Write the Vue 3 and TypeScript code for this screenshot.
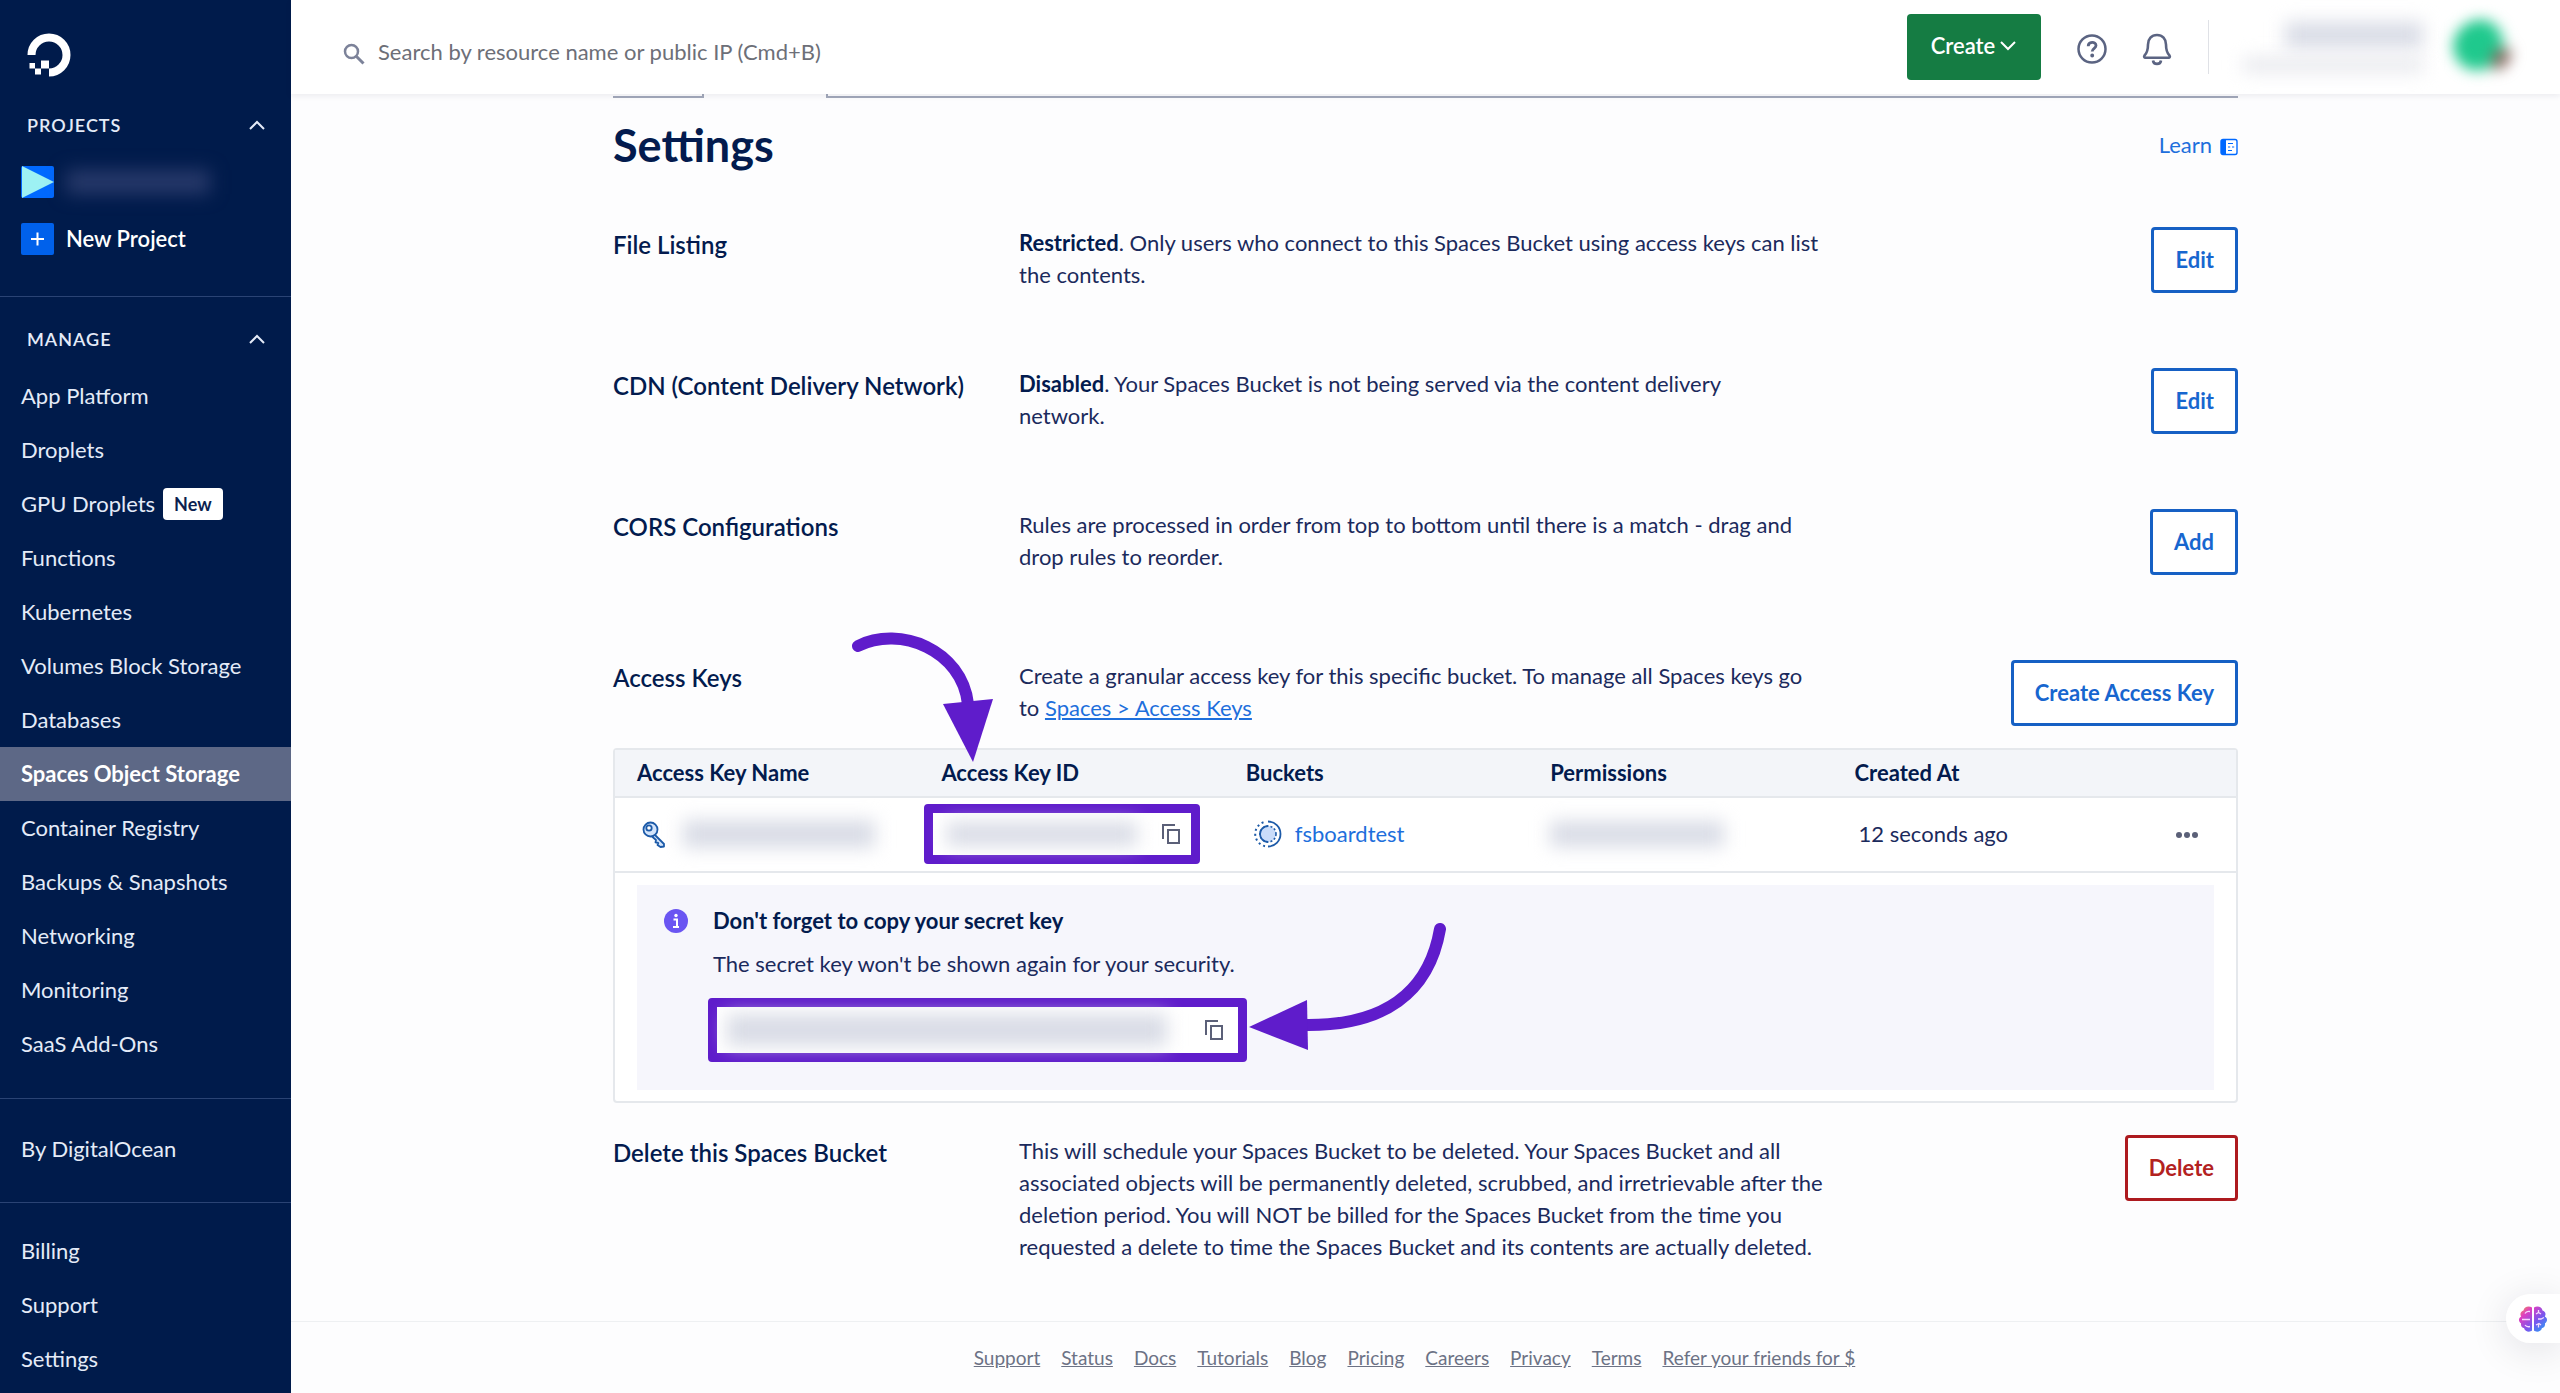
<script setup lang="ts">
import { ref } from 'vue'

interface NavItem {
  label: string
  badge?: string
  active?: boolean
}

interface SettingRow {
  title: string
  lead?: string
  lines: string[]
  action: string
}

const manageItems: NavItem[] = [
  { label: 'App Platform' },
  { label: 'Droplets' },
  { label: 'GPU Droplets', badge: 'New' },
  { label: 'Functions' },
  { label: 'Kubernetes' },
  { label: 'Volumes Block Storage' },
  { label: 'Databases' },
  { label: 'Spaces Object Storage', active: true },
  { label: 'Container Registry' },
  { label: 'Backups & Snapshots' },
  { label: 'Networking' },
  { label: 'Monitoring' },
  { label: 'SaaS Add-Ons' },
]

const accountItems = ['Billing', 'Support', 'Settings']

const settings: SettingRow[] = [
  {
    title: 'File Listing',
    lead: 'Restricted',
    lines: ['. Only users who connect to this Spaces Bucket using access keys can list', 'the contents.'],
    action: 'Edit',
  },
  {
    title: 'CDN (Content Delivery Network)',
    lead: 'Disabled',
    lines: ['. Your Spaces Bucket is not being served via the content delivery', 'network.'],
    action: 'Edit',
  },
  {
    title: 'CORS Configurations',
    lines: ['Rules are processed in order from top to bottom until there is a match - drag and', 'drop rules to reorder.'],
    action: 'Add',
  },
]

const columns = ['Access Key Name', 'Access Key ID', 'Buckets', 'Permissions', 'Created At']

const footerLinks = [
  'Support', 'Status', 'Docs', 'Tutorials', 'Blog', 'Pricing', 'Careers', 'Privacy', 'Terms', 'Refer your friends for $',
]

const query = ref('')
</script>

<template>
  <div class="app">
    <aside class="sidebar">
      <a class="logo" href="#" aria-label="Home">
        <svg width="44" height="44" viewBox="0 0 44 44">
          <path d="M4.500 22 A17.500 17.500 0 1 1 22 39.500" fill="none" stroke="#fff" stroke-width="8" />
          <path d="M14 27.500h8v8h-8zM8 35.500h6v6H8zM2.500 30h5.500v5.500H2.500z" fill="#fff" />
        </svg>
      </a>

      <section class="group projects">
        <button class="group-title" type="button">
          PROJECTS
          <svg width="18" height="12" viewBox="0 0 18 12"><path d="M2 10l7-7 7 7" fill="none" stroke="currentColor" stroke-width="2" /></svg>
        </button>
        <a class="project" href="#" aria-label="Project">
          <svg width="33" height="32" viewBox="0 0 33 32"><rect width="33" height="32" rx="2" fill="#0069ff" /><path d="M1 0l32 16L1 32z" fill="#9df1f3" /></svg>
          <span class="redacted redacted-project"></span>
        </a>
        <a class="project" href="#">
          <svg width="33" height="32" viewBox="0 0 33 32"><rect width="33" height="32" rx="2" fill="#0061eb" /><path d="M10 16h13M16.500 9.500v13" stroke="#fff" stroke-width="2" /></svg>
          New Project
        </a>
      </section>

      <nav class="group manage">
        <button class="group-title" type="button">
          MANAGE
          <svg width="18" height="12" viewBox="0 0 18 12"><path d="M2 10l7-7 7 7" fill="none" stroke="currentColor" stroke-width="2" /></svg>
        </button>
        <a v-for="item in manageItems" :key="item.label" class="nav-item" :class="{ active: item.active }" href="#">
          {{ item.label }}
          <span v-if="item.badge" class="badge">{{ item.badge }}</span>
        </a>
      </nav>

      <nav class="group partner">
        <a class="nav-item" href="#">By DigitalOcean</a>
      </nav>

      <nav class="group account">
        <a v-for="label in accountItems" :key="label" class="nav-item" href="#">{{ label }}</a>
      </nav>
    </aside>

    <div class="page">
      <header class="topbar">
        <label class="search">
          <svg width="22" height="22" viewBox="0 0 22 22" fill="none" stroke="#7c8299"><circle cx="8.500" cy="8.500" r="6.500" stroke-width="2.500" /><path d="M13.500 13.500l7 7" stroke-width="3" /></svg>
          <input v-model="query" type="search" aria-label="Search" placeholder="Search by resource name or public IP (Cmd+B)" />
        </label>
        <button class="create" type="button">
          Create
          <svg width="18" height="12" viewBox="0 0 18 12"><path d="M2 2l7 7 7-7" fill="none" stroke="#fff" stroke-width="2" /></svg>
        </button>
        <button class="icon-button help" type="button" aria-label="Help">
          <svg width="32" height="32" viewBox="0 0 32 32" fill="none" stroke="#5b6482"><circle cx="16" cy="16" r="13.500" stroke-width="2.500" /><path d="M12.200 13.200c0-5 7.800-5 7.800-.6 0 2.800-3.800 2.800-3.800 6" stroke-width="2.800" /><circle cx="16.200" cy="22.500" r="1.200" stroke-width="1.500" fill="#5b6482" /></svg>
        </button>
        <button class="icon-button bell" type="button" aria-label="Notifications">
          <svg width="32" height="34" viewBox="0 0 32 34" fill="none" stroke="#5b6482" stroke-width="2.600" stroke-linejoin="round"><path d="M16 3c-5.500 0-9 4-9 9.500 0 6-1 8.500-3.500 11-.8 1-.3 2.200 1 2.200h23c1.300 0 1.800-1.200 1-2.200-2.500-2.500-3.500-5-3.500-11C25 7 21.500 3 16 3z" /><path d="M12 28.500c.5 4.500 7.500 4.500 8 0" /></svg>
        </button>
        <div class="account-menu">
          <span class="account-lines">
            <span class="redacted redacted-team"></span>
            <span class="redacted redacted-mail"></span>
          </span>
          <span class="avatar"></span>
        </div>
      </header>

      <main class="content">
        <div class="tab-edge">
          <span class="tab-edge-left"></span>
          <span class="tab-edge-right"></span>
        </div>

        <div class="heading">
          <h1>Settings</h1>
          <a class="learn" href="#">
            Learn
            <svg width="18" height="18" viewBox="0 0 18 18"><rect x="1" y="1.500" width="16" height="15" rx="2" fill="#fff" stroke="#0069ff" stroke-width="1.400" /><path d="M1 3.500a2 2 0 0 1 2-2h3v15H3a2 2 0 0 1-2-2z" fill="#0069ff" /><path d="M8 5.500h5M8 9h2.200M12 9h2.200M8 12.500h4" stroke="#0069ff" stroke-width="1.200" /></svg>
          </a>
        </div>

        <section v-for="row in settings" :key="row.title" class="setting">
          <h2>{{ row.title }}</h2>
          <p>
            <strong v-if="row.lead">{{ row.lead }}</strong>{{ row.lines[0] }}<br />{{ row.lines[1] }}
          </p>
          <button class="outline" type="button">{{ row.action }}</button>
        </section>

        <section class="setting keys-intro">
          <h2>Access Keys</h2>
          <p>
            Create a granular access key for this specific bucket. To manage all Spaces keys go<br />to
            <a href="#">Spaces &gt; Access Keys</a>
          </p>
          <button class="outline" type="button">Create Access Key</button>
        </section>

        <div class="table-frame">
          <table>
            <thead>
              <tr>
                <th v-for="column in columns" :key="column" scope="col">{{ column }}</th>
                <th class="menu-column" aria-label="Actions"></th>
              </tr>
            </thead>
            <tbody>
              <tr class="key-row">
                <td>
                  <div class="cell name-cell">
                    <svg width="26" height="28" viewBox="0 0 26 28" fill="#d3e4fb" stroke="#1c5aa8" stroke-width="1.800" stroke-linejoin="round"><path d="M13.500 14.500l9.500 9.500v2.500l-3.500.5-3-2 .8-2-2.800-.6.500-2.400-4-3.500z" /><circle cx="9.500" cy="9.500" r="7" /><circle cx="8" cy="8" r="2.700" fill="#fff" /></svg>
                    <span class="redacted redacted-name"></span>
                  </div>
                </td>
                <td class="id-column">
                  <div class="callout id-callout">
                    <span class="redacted redacted-id"></span>
                    <button class="copy" type="button" aria-label="Copy access key ID">
                      <svg width="20" height="22" viewBox="0 0 20 22" fill="none" stroke="#5b6078" stroke-width="2"><path d="M2 16V2h12" /><path d="M7 7h11v13H7z" /></svg>
                    </button>
                    <svg class="arrow arrow-down" width="150" height="136" viewBox="850 628 150 136">
                      <path d="M858 646C900 625 962 650 968 704" fill="none" stroke="#5f1ccb" stroke-width="12" stroke-linecap="round" />
                      <path d="M943 704l50-5-20 63z" fill="#5f1ccb" />
                    </svg>
                  </div>
                </td>
                <td>
                  <div class="cell bucket-cell">
                    <svg width="28" height="28" viewBox="0 0 28 28" fill="none" stroke="#1c5aa8"><circle cx="14" cy="14" r="8" fill="#c9dcfa" stroke-width="1.600" stroke-dasharray="2 2" /><path d="M14 6a8 8 0 0 0 0 16" stroke-width="1.800" /><path d="M14 1.500a12.500 12.500 0 0 1 0 25" stroke-width="1.800" /><path d="M11 26.200a12.500 12.500 0 0 1 0-24.400" stroke-width="2" stroke-dasharray="2 3" /></svg>
                    <a href="#">fsboardtest</a>
                  </div>
                </td>
                <td><div class="cell"><span class="redacted redacted-permission"></span></div></td>
                <td><div class="cell created">12 seconds ago</div></td>
                <td class="menu-column">
                  <button class="more" type="button" aria-label="More actions">
                    <svg width="24" height="8" viewBox="0 0 24 8" fill="#5b6078"><circle cx="4" cy="4" r="3" /><circle cx="12" cy="4" r="3" /><circle cx="20" cy="4" r="3" /></svg>
                  </button>
                </td>
              </tr>
              <tr class="notice-row">
                <td colspan="6">
                  <div class="notice">
                    <svg class="info" width="24" height="24" viewBox="0 0 24 24"><circle cx="12" cy="12" r="12" fill="#6a55f2" /><path d="M9.500 10.500h3.500v7.500M9 18h6" stroke="#fff" stroke-width="2" fill="none" /><circle cx="12" cy="6.500" r="1.700" fill="#fff" /></svg>
                    <div class="notice-text">
                      <strong>Don't forget to copy your secret key</strong>
                      <p>The secret key won't be shown again for your security.</p>
                      <div class="callout secret-callout">
                        <span class="redacted redacted-secret"></span>
                        <button class="copy" type="button" aria-label="Copy secret key">
                          <svg width="20" height="22" viewBox="0 0 20 22" fill="none" stroke="#5b6078" stroke-width="2"><path d="M2 16V2h12" /><path d="M7 7h11v13H7z" /></svg>
                        </button>
                        <svg class="arrow arrow-left" width="200" height="134" viewBox="1250 920 200 134">
                          <path d="M1441 931C1430 995 1385 1028 1306 1027" fill="none" stroke="#5f1ccb" stroke-width="12" stroke-linecap="round" />
                          <path d="M1308 1002l1 50-59-23z" fill="#5f1ccb" />
                        </svg>
                      </div>
                    </div>
                  </div>
                </td>
              </tr>
            </tbody>
          </table>
        </div>

        <section class="setting delete-row">
          <h2>Delete this Spaces Bucket</h2>
          <p>
            This will schedule your Spaces Bucket to be deleted. Your Spaces Bucket and all<br />
            associated objects will be permanently deleted, scrubbed, and irretrievable after the<br />
            deletion period. You will NOT be billed for the Spaces Bucket from the time you<br />
            requested a delete to time the Spaces Bucket and its contents are actually deleted.
          </p>
          <button class="outline danger" type="button">Delete</button>
        </section>
      </main>

      <footer class="footer">
        <a v-for="link in footerLinks" :key="link" href="#">{{ link }}</a>
      </footer>
    </div>

    <button class="assistant" type="button" aria-label="Assistant">
      <svg width="30" height="28" viewBox="0 0 30 28">
        <defs>
          <linearGradient id="brain" x1="0" y1="0" x2="1" y2="1">
            <stop offset="0" stop-color="#f2a43c" />
            <stop offset=".25" stop-color="#e03fc0" />
            <stop offset=".6" stop-color="#7a55ee" />
            <stop offset="1" stop-color="#1fa8f5" />
          </linearGradient>
        </defs>
        <path d="M14 2.500C11 .5 6 1.500 5.500 5.500 2 6.500 2 10 3.200 11.500 0 13 .5 17 3 18.200 2.500 22 5 23 6 23c1 4 6 4.500 8 2.500zM16 2.500c3-2 8-1 8.500 3C28 6.500 28 10 26.800 11.500 30 13 29.500 17 27 18.200 27.500 22 25 23 24 23c-1 4-6 4.500-8 2.500z" fill="url(#brain)" />
        <path d="M4 14.500h8M7 8.500c1-2 3-2.500 5-2M7 20c1 1.500 3 2 5 1.500M18 9l2.500-1.500L23 9M20.500 7.500V5M20 14h3l3-1.500M18 20l3-1.500 2 1.500M20.500 18.500v4" fill="none" stroke="#f6d9ff" stroke-width="1.300" />
      </svg>
    </button>
  </div>
</template>

<style>
body {
  margin: 0;
  background: #fdfdfe;
}
</style>

<style scoped>
.app {
  display: flex;
  min-height: 100vh;
  font-family: Lato, 'Open Sans', sans-serif;
  font-size: 22px;
  line-height: 32px;
  color: #1b2a5c;
  background: #fdfdfe;
}

.app *,
.app {
  box-sizing: border-box;
}

button {
  font: inherit;
  border: 0;
  padding: 0;
  background: none;
  color: inherit;
  cursor: pointer;
}

a {
  color: #1e6fdc;
  text-decoration: none;
}

svg {
  display: block;
  flex: none;
}

.redacted {
  display: block;
  filter: blur(9px);
  background: #d9dce6;
}

/* Sidebar */
.sidebar {
  flex: none;
  width: 291px;
  background: #001b4b;
  color: #e4ebf8;
}

.logo {
  display: block;
  padding: 33px 27px 20px;
}

.group {
  border-bottom: 1px solid #2a4374;
}

.group:last-child {
  border-bottom: 0;
}

.group-title {
  display: flex;
  align-items: center;
  justify-content: space-between;
  width: 100%;
  height: 56px;
  padding: 0 25px 0 27px;
  font-size: 18px;
  font-weight: 600;
  letter-spacing: 1px;
}

.projects {
  padding-bottom: 29px;
}

.project {
  display: flex;
  align-items: center;
  gap: 12px;
  height: 57px;
  padding-left: 21px;
  color: #fff;
  font-weight: 600;
}

.redacted-project {
  width: 144px;
  height: 24px;
  background: #27396a;
}

.manage {
  padding: 12px 0 27px;
}

.manage .group-title {
  height: 60px;
}

.nav-item {
  display: flex;
  align-items: center;
  gap: 8px;
  height: 54px;
  padding-left: 21px;
  color: #e4ebf8;
}

.nav-item.active {
  background: #5d6886;
  color: #fff;
  font-weight: 700;
}

.badge {
  padding: 0 11px;
  border-radius: 4px;
  background: #fff;
  color: #0c1f50;
  font-size: 18px;
  font-weight: 700;
}

.partner {
  padding: 23px 0 26px;
}

.account {
  padding-top: 21px;
}

/* Top bar */
.page {
  flex: 1;
  min-width: 0;
  display: flex;
  flex-direction: column;
}

.topbar {
  position: relative;
  display: flex;
  align-items: center;
  height: 94px;
  padding: 0 47px 0 52px;
  background: #fff;
  box-shadow: 0 2px 6px rgba(20, 30, 60, 0.08);
}

.search {
  flex: 1;
  display: flex;
  align-items: center;
  gap: 13px;
  padding-top: 14px;
}

.search input {
  flex: 1;
  border: 0;
  padding: 0 0 4px;
  outline: 0;
  background: none;
  font: inherit;
  color: #1b2a5c;
}

.search input::placeholder {
  color: #6d6f78;
  opacity: 1;
}

.create {
  display: flex;
  align-items: center;
  justify-content: center;
  gap: 4px;
  width: 134px;
  height: 66px;
  padding-bottom: 2px;
  border-radius: 4px;
  background: #157c43;
  color: #fff;
  font-weight: 600;
}

.icon-button.help {
  margin-left: 35px;
}

.icon-button.bell {
  margin-left: 33px;
}

.icon-button {
  padding-top: 4px;
}

.account-menu {
  display: flex;
  align-items: center;
  gap: 30px;
  height: 54px;
  margin-left: 35px;
  padding-left: 34px;
  border-left: 1px solid #dfe1e6;
}

.account-lines {
  display: flex;
  flex-direction: column;
  align-items: flex-end;
  gap: 10px;
  width: 180px;
}

.redacted-team {
  width: 138px;
  height: 26px;
}

.redacted-mail {
  width: 180px;
  height: 14px;
  background: #e6e7ec;
}

.avatar {
  width: 60px;
  height: 56px;
  border-radius: 50%;
  filter: blur(7px);
  background: radial-gradient(circle at 84% 74%, #8a6a62 0 12%, transparent 24%), radial-gradient(circle at 40% 45%, #1fc98d 0 48%, transparent 62%);
}

/* Content */
.content {
  width: calc(100% - 64px);
  max-width: 1625px;
  margin: 0 auto;
}

.tab-edge {
  display: flex;
  gap: 122px;
  height: 4px;
}

.tab-edge-left,
.tab-edge-right {
  border: 0 solid #a3a9ba;
  border-bottom-width: 2px;
}

.tab-edge-left {
  width: 91px;
  border-right-width: 2px;
}

.tab-edge-right {
  flex: 1;
  border-left-width: 2px;
}

.heading {
  display: flex;
  align-items: center;
  justify-content: space-between;
  padding: 23px 0 58px;
}

h1 {
  margin: 0;
  font-size: 45px;
  line-height: 48px;
  font-weight: 700;
  color: #031b4e;
}

.learn {
  display: flex;
  align-items: center;
  gap: 8px;
}

.learn svg {
  margin-top: 4px;
}

.setting {
  display: grid;
  grid-template-columns: 406px 1fr auto;
  align-items: start;
  margin-bottom: 75px;
}

h2 {
  margin: 0;
  font-size: 24px;
  line-height: 36px;
  font-weight: 600;
  color: #031b4e;
}

.setting p {
  margin: 0;
}

.setting p a {
  text-decoration: underline;
}

strong {
  font-weight: 700;
  color: #031b4e;
}

.outline {
  height: 66px;
  padding: 0 21px 1px;
  border: 3px solid #1660c4;
  border-radius: 4px;
  background: #fff;
  color: #1766cf;
  font-weight: 700;
}

.outline.danger {
  border-color: #ad1a1f;
  color: #b3221f;
}

.keys-intro {
  margin: 85px 0 22px;
}

/* Access key table */
.table-frame {
  border: 2px solid #e5e8ec;
  border-radius: 4px;
  background: #fff;
}

table {
  width: 100%;
  table-layout: fixed;
  border-collapse: separate;
  border-spacing: 0;
}

th {
  height: 48px;
  padding: 0 0 1px 22px;
  border-bottom: 2px solid #e5e8ec;
  background: #f3f5f9;
  text-align: left;
  font-weight: 700;
  color: #031b4e;
}

td {
  padding: 0 0 0 22px;
}

.key-row td {
  height: 75px;
  padding-bottom: 1px;
  border-bottom: 2px solid #e5e8ec;
}

.menu-column {
  width: 99px;
  padding: 0;
  text-align: center;
}

.more {
  display: inline-flex;
  align-items: center;
  height: 32px;
  vertical-align: middle;
}

.cell {
  display: flex;
  align-items: center;
}

.name-cell {
  gap: 16px;
  padding-left: 4px;
}

.bucket-cell {
  gap: 13px;
  padding-left: 8px;
}

.created {
  padding-left: 4px;
}

.redacted-name {
  width: 192px;
  height: 28px;
}

.redacted-permission {
  width: 174px;
  height: 26px;
}

.id-column {
  padding-left: 5px;
}

.callout {
  position: relative;
  display: flex;
  align-items: center;
  justify-content: space-between;
  border: 9px solid #5f1ccb;
  border-radius: 4px;
  background: #fff;
}

.id-callout {
  width: 276px;
  height: 60px;
  padding: 0 10px 0 14px;
}

.redacted-id {
  width: 190px;
  height: 24px;
}

.arrow {
  position: absolute;
}

.arrow-down {
  right: 191px;
  bottom: 91px;
}

.arrow-left {
  left: 532px;
  top: -89px;
}

.notice-row td {
  padding: 12px 22px 11px;
}

.notice {
  display: flex;
  align-items: flex-start;
  gap: 25px;
  min-height: 205px;
  padding: 20px 27px 26px;
  background: #f6f6fc;
}

.info {
  margin-top: 4px;
}

.notice-text p {
  margin: 11px 0 18px;
}

.secret-callout {
  width: 539px;
  height: 64px;
  margin-left: -5px;
  padding: 0 14px 0 10px;
}

.redacted-secret {
  width: 440px;
  height: 32px;
}

/* Delete row and footer */
.delete-row {
  margin: 32px 0 53px;
}

.footer {
  display: flex;
  flex-wrap: wrap;
  justify-content: center;
  gap: 21px;
  margin-top: auto;
  padding: 23px 22px 22px 0;
  border-top: 1px solid #eef0f2;
  font-size: 19px;
  line-height: 26px;
}

.footer a {
  color: #6c7285;
  text-decoration: underline;
}

.assistant {
  position: fixed;
  right: 0;
  bottom: 50px;
  width: 54px;
  height: 49px;
  padding-left: 12px;
  border-radius: 25px 0 0 25px;
  background: #fff;
  box-shadow: 0 6px 40px rgba(20, 20, 40, 0.12);
}
</style>
